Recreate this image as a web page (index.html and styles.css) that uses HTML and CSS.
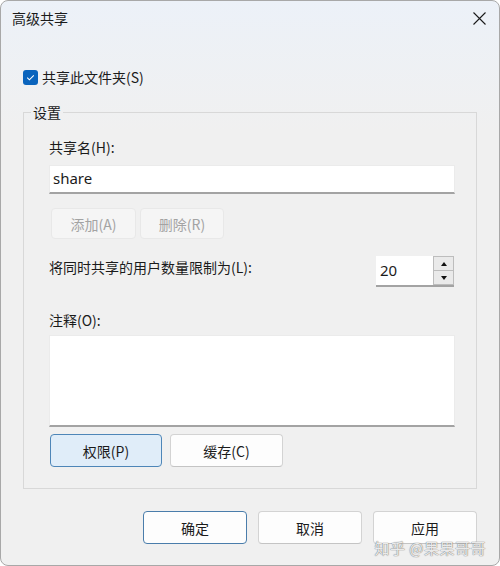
FILE: index.html
```html
<!DOCTYPE html>
<html lang="zh-CN">

<head>
  <meta charset="UTF-8">
  <meta name="viewport" content="width=device-width, initial-scale=1.0">
  <title>高级共享</title>
  <link rel="stylesheet" href="styles.css">
</head>

<body>
  <div class="dialog">
    <div class="titlebar">
      <span class="title">高级共享</span>
      <button class="close-btn" aria-label="关闭">
        <svg width="13" height="13" viewBox="0 0 13 13">
          <path d="M0.5 0.5L12.5 12.5M12.5 0.5L0.5 12.5" stroke="#1b1b1b" stroke-width="1.1" fill="none" />
        </svg>
      </button>
    </div>

    <div class="content">
      <label class="check">
        <span class="check-box">
          <svg width="15" height="15" viewBox="0 0 15 15">
            <path d="M4.2 7.6L6.4 9.8L10.8 5.3" stroke="#ffffff" stroke-width="1.1" fill="none" />
          </svg>
        </span>
        共享此文件夹(S)
      </label>

      <fieldset class="group">
        <legend>设置</legend>

        <div class="field-label">共享名(H):</div>
        <div class="textbox">share</div>

        <div class="btn-row top-btns">
          <button class="btn btn-disabled btn-add">添加(A)</button>
          <button class="btn btn-disabled btn-del">删除(R)</button>
        </div>

        <div class="limit-row">
          <span class="limit-label">将同时共享的用户数量限制为(L):</span>
          <div class="spinner">
            <div class="spinner-value">20</div>
            <div class="spinner-arrows">
              <span class="arrow arrow-up"></span>
              <span class="arrow arrow-down"></span>
            </div>
          </div>
        </div>

        <div class="field-label note-label">注释(O):</div>
        <div class="textarea"></div>

        <div class="btn-row bottom-btns">
          <button class="btn btn-focus btn-perm">权限(P)</button>
          <button class="btn btn-cache">缓存(C)</button>
        </div>
      </fieldset>

      <div class="actions">
        <button class="btn btn-action btn-default">确定</button>
        <button class="btn btn-action">取消</button>
        <button class="btn btn-action btn-apply">应用</button>
      </div>
    </div>

    <div class="watermark">知乎 @果果哥哥</div>
  </div>
</body>

</html>
```

FILE: styles.css
```css
body {
  margin: 0;
  padding: 0;
  font-family: "Noto Sans CJK SC", "Noto Sans", sans-serif;
  font-size: 14px;
  line-height: 20px;
  color: #1b1b1b;
  background-color: #ffffff;
}

.dialog {
  position: relative;
  width: 500px;
  height: 566px;
  box-sizing: border-box;
  border: 1px solid #a8a8a8;
  border-radius: 8px;
  overflow: hidden;
  background: linear-gradient(#ecf1f8 0, #f0f0f0 130px);
}

.titlebar {
  height: 34px;
  display: flex;
  align-items: center;
  justify-content: space-between;
  padding: 0 13px 0 11px;
}

.title {
  font-size: 14px;
}

.close-btn {
  border: none;
  background: none;
  padding: 0;
  width: 13px;
  height: 13px;
  display: flex;
}

.content {
  padding: 32px 22px 0 22px;
}

.check {
  display: flex;
  align-items: center;
  gap: 4px;
  height: 20px;
}

.check-box {
  width: 15px;
  height: 15px;
  border-radius: 3px;
  background-color: #0a64bd;
  display: flex;
}

.group {
  margin: 15px 0 0 0;
  padding: 15px 21px 21px 25px;
  border: 1px solid #d8d8d8;
  display: flex;
  flex-direction: column;
  min-width: 0;
}

.group legend {
  padding: 0 2px;
  margin-left: -18px;
  line-height: 20px;
}

.field-label {
  height: 20px;
}

.textbox {
  margin-top: 8px;
  height: 29px;
  box-sizing: border-box;
  background-color: #ffffff;
  border: 1px solid #ebebeb;
  border-bottom: 2px solid #a3a3a3;
  padding: 0 3px;
  font-family: "Noto Sans", sans-serif;
  font-size: 15px;
  line-height: 25px;
}

.btn {
  font-family: "Noto Sans CJK SC", sans-serif;
  font-size: 14px;
  color: #1b1b1b;
  background-color: #fdfdfd;
  border: 1px solid #d3d3d3;
  border-bottom-color: #c4c4c4;
  border-radius: 4px;
  padding: 0;
  box-sizing: border-box;
}

.btn-row {
  display: flex;
}

.top-btns {
  margin-top: 14px;
  margin-left: 2px;
  gap: 4px;
}

.btn-disabled {
  height: 31px;
  background-color: #f5f5f5;
  border-color: #e8e8e8;
  color: #a3a3a3;
}

.btn-add {
  width: 85px;
}

.btn-del {
  width: 84px;
}

.limit-row {
  margin-top: 17px;
  height: 31px;
  display: flex;
  justify-content: space-between;
  align-items: flex-start;
}

.limit-label {
  margin-top: 1px;
}

.spinner {
  display: flex;
  width: 78px;
  height: 31px;
  box-sizing: border-box;
  margin-right: 1px;
  border-bottom: 2px solid #a3a3a3;
}

.spinner-value {
  flex: 1;
  background-color: #ffffff;
  padding-left: 4px;
  font-family: "Noto Sans", sans-serif;
  font-size: 15px;
  line-height: 28px;
}

.spinner-arrows {
  width: 21px;
  display: flex;
  flex-direction: column;
}

.arrow {
  flex: 1;
  background-color: #eaeaea;
  border: 1px solid #bdbdbd;
  display: flex;
  align-items: center;
  justify-content: center;
}

.arrow-up {
  border-bottom: none;
}

.arrow::after {
  content: "";
  width: 0;
  height: 0;
  border-left: 3px solid transparent;
  border-right: 3px solid transparent;
}

.arrow-up::after {
  border-bottom: 4px solid #111111;
}

.arrow-down::after {
  border-top: 4px solid #111111;
}

.note-label {
  margin-top: 23px;
}

.textarea {
  margin-top: 5px;
  height: 92px;
  box-sizing: border-box;
  background-color: #ffffff;
  border: 1px solid #ebebeb;
  border-bottom: 2px solid #a3a3a3;
}

.bottom-btns {
  margin-top: 7px;
  margin-left: 1px;
  gap: 8px;
}

.bottom-btns .btn {
  height: 33px;
}

.btn-perm {
  width: 112px;
}

.btn-cache {
  width: 113px;
}

.btn-focus {
  background-color: #e0edf9;
  border: 1px solid #4e86b8;
}

.actions {
  margin-top: 22px;
  display: flex;
  justify-content: flex-end;
  gap: 11px;
}

.btn-action {
  width: 104px;
  height: 33px;
  line-height: 18px;
}

.btn-default {
  border: 1px solid #4a7dab;
}

.watermark {
  position: absolute;
  right: 13px;
  bottom: 10px;
  font-size: 15px;
  line-height: 15px;
  color: rgba(255, 255, 255, 0.85);
  text-shadow: 0 0 1px #7a7a7a, 0 0 1px #7a7a7a;
  letter-spacing: 0.5px;
}
```
